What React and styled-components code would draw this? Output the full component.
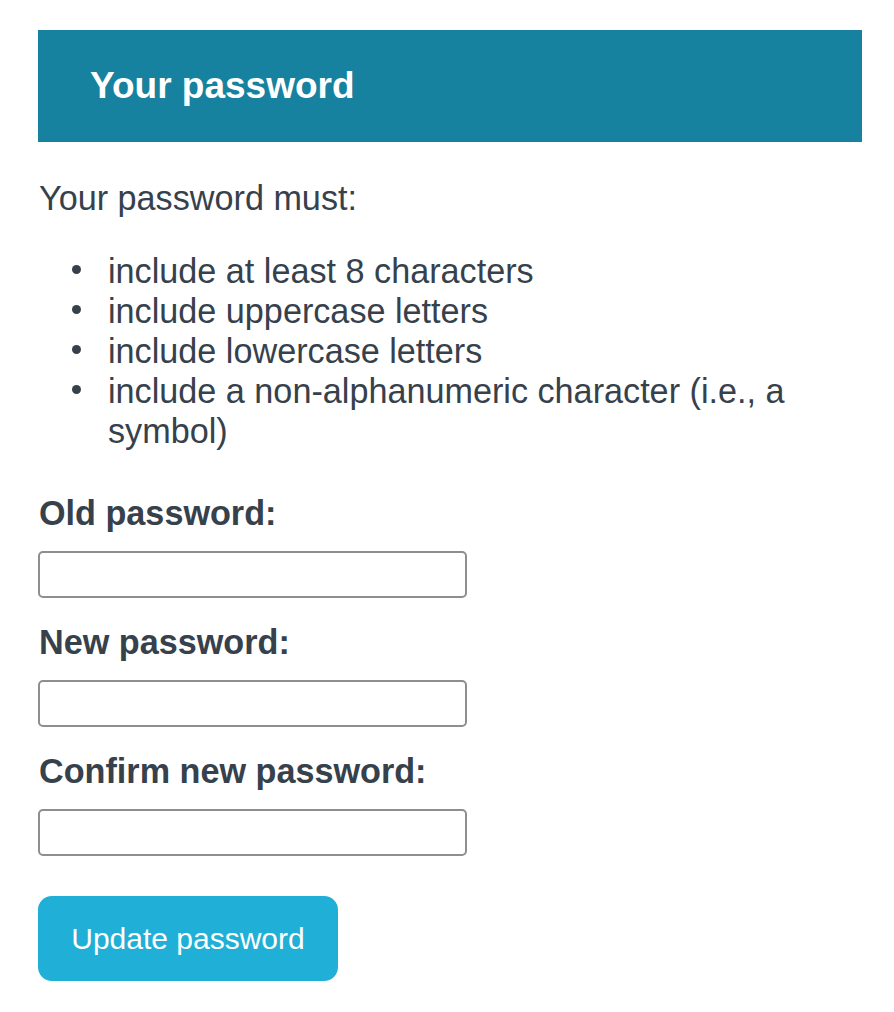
import React from "react";
import styled, { createGlobalStyle } from "styled-components";

const Global = createGlobalStyle`
  html, body { margin: 0; padding: 0; background: #ffffff; }
  body { font-family: "Liberation Sans", Arial, Helvetica, sans-serif; color: #36414c; }
  * { box-sizing: border-box; }
`;

const Page = styled.div`
  padding: 30px 32px 40px 38px;
`;

const Header = styled.div`
  height: 112px;
  background: #16829f;
  display: flex;
  align-items: center;
  padding: 0 52px;
`;

const Title = styled.h1`
  margin: 0;
  font-size: 37px;
  font-weight: 700;
  color: #ffffff;
`;

const Intro = styled.p`
  margin: 36px 0 0 1px;
  font-size: 34.2px;
  line-height: 40px;
`;

const Rules = styled.ul`
  margin: 33px 0 0;
  padding: 0 40px 0 34px;
  font-size: 34.2px;
  line-height: 40px;
  list-style: none;
`;

const Rule = styled.li`
  display: flex;
  align-items: flex-start;

  &::before {
    content: "";
    flex: none;
    width: 9px;
    height: 9px;
    border-radius: 50%;
    background: currentColor;
    margin: 14px 27px 0 0;
  }
`;

const Form = styled.form`
  display: flex;
  flex-direction: column;
  align-items: flex-start;
  margin-top: 42px;
`;

const Field = styled.div`
  display: flex;
  flex-direction: column;
  align-items: flex-start;
  margin-bottom: ${(p) => (p.$last ? "40px" : "24px")};
`;

const Label = styled.label`
  font-size: 34.2px;
  line-height: 40px;
  font-weight: 700;
  margin: 0 0 18px 1px;
`;

const Input = styled.input`
  width: 429px;
  height: 47px;
  border: 2px solid #8e8e8e;
  border-radius: 5px;
  background: #fff;
  font-size: 28px;
  padding: 0 10px;
  outline: none;
`;

const Button = styled.button`
  height: 85px;
  width: 300px;
  border: none;
  border-radius: 14px;
  background: #20afd6;
  color: #ffffff;
  font-family: "Liberation Sans", Arial, Helvetica, sans-serif;
  font-size: 30px;
  padding: 0;
  cursor: pointer;
`;

const rules = [
  "include at least 8 characters",
  "include uppercase letters",
  "include lowercase letters",
  "include a non-alphanumeric character (i.e., a symbol)",
];

export default function App() {
  return (
    <Page>
      <Global />
      <Header>
        <Title>Your password</Title>
      </Header>
      <Intro>Your password must:</Intro>
      <Rules>
        {rules.map((r) => (
          <Rule key={r}>{r}</Rule>
        ))}
      </Rules>
      <Form onSubmit={(e) => e.preventDefault()}>
        <Field>
          <Label htmlFor="old">Old password:</Label>
          <Input id="old" type="password" />
        </Field>
        <Field>
          <Label htmlFor="new">New password:</Label>
          <Input id="new" type="password" />
        </Field>
        <Field $last>
          <Label htmlFor="confirm">Confirm new password:</Label>
          <Input id="confirm" type="password" />
        </Field>
        <Button type="submit">Update password</Button>
      </Form>
    </Page>
  );
}
